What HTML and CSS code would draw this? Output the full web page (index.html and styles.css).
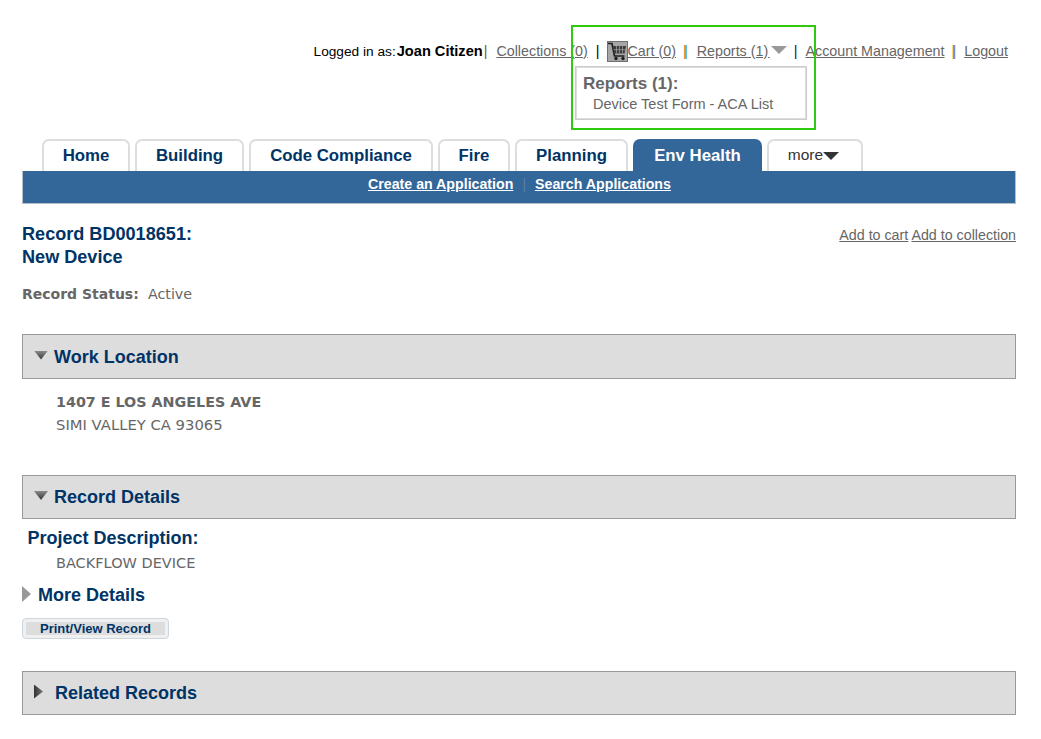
FILE: index.html
```html
<!DOCTYPE html>
<html lang="en">
<head>
<meta charset="utf-8">
<title>Record BD0018651</title>
<link rel="stylesheet" href="styles.css">
</head>
<body>
<div class="page">
  <header class="topbar">
    <span class="login">Logged in as:<b>Joan Citizen</b></span>
    <span class="sep sep-tan">|</span>
    <a class="toplink" href="#">Collections (0)</a>
    <span class="sep sep-black">|</span>
    <svg class="cart" viewBox="0 0 21 21" width="21" height="21" aria-hidden="true">
      <rect x="0.5" y="0.5" width="20" height="20" fill="#a6a6a6" stroke="#6f6f6f"/>
      <path d="M1 2.5h4l2.5 12.5h10" fill="none" stroke="#1f1f1f" stroke-width="1.7"/>
      <path d="M6 5h13l-1.5 7.5H7.4z" fill="#3d3d3d"/>
      <path d="M9.5 5v7.5M12.5 5v7.5M15.5 5v7.5M6.6 8.7h11.8" stroke="#a6a6a6" stroke-width=".7"/>
      <circle cx="9" cy="17.5" r="1.7" fill="#1f1f1f"/>
      <circle cx="16" cy="17.5" r="1.7" fill="#1f1f1f"/>
    </svg>
    <a class="toplink" href="#">Cart (0)</a>
    <span class="sep sep-fringe sep-wide">|</span>
    <a class="toplink" href="#">Reports (1)<span class="nbsp">&nbsp;</span></a>
    <span class="report-arrow"></span>
    <span class="sep sep-purple">|</span>
    <a class="toplink" href="#">Account Management</a>
    <span class="sep sep-fringe">|</span>
    <a class="toplink" href="#">Logout</a>
  </header>

  <div class="dropdown">
    <div class="dropdown-title">Reports (1):</div>
    <div class="dropdown-item">Device Test Form - ACA List</div>
  </div>
  <div class="highlight"></div>

  <nav class="tabs">
    <a class="tab tab-home" href="#">Home</a>
    <a class="tab tab-building" href="#">Building</a>
    <a class="tab tab-code" href="#">Code Compliance</a>
    <a class="tab tab-fire" href="#">Fire</a>
    <a class="tab tab-planning" href="#">Planning</a>
    <a class="tab tab-env active" href="#">Env Health</a>
    <a class="tab tab-more" href="#">more<span class="more-arrow"></span></a>
  </nav>
  <div class="subnav">
    <a href="#">Create an Application</a>
    <span class="subsep">|</span>
    <a href="#">Search Applications</a>
  </div>

  <div class="record-head">
    <h1>Record BD0018651:<br>New Device</h1>
    <div class="record-actions"><a href="#">Add to cart</a> <a href="#">Add to collection</a></div>
  </div>
  <p class="status"><b>Record Status:</b>&nbsp; Active</p>

  <section class="bar bar-work">
    <span class="tri-down"></span><h2>Work Location</h2>
  </section>
  <div class="address">
    <div class="addr-1">1407 E LOS ANGELES AVE</div>
    <div class="addr-2">SIMI VALLEY CA 93065</div>
  </div>

  <section class="bar bar-details">
    <span class="tri-down"></span><h2>Record Details</h2>
  </section>
  <h3 class="project-title">Project Description:</h3>
  <div class="project-text">BACKFLOW DEVICE</div>
  <div class="more-details">
    <span class="tri-right-grey"></span><h3>More Details</h3>
  </div>
  <a class="print-btn" href="#"><span>Print/View Record</span></a>

  <section class="bar bar-related">
    <span class="tri-right"></span><h2>Related Records</h2>
  </section>
</div>
</body>
</html>
```
FILE: styles.css
```css
* { box-sizing: border-box; }
html, body { margin: 0; padding: 0; background: #fff; }
body { font-family: "Liberation Sans", Arial, sans-serif; color: #666; overflow: hidden; }
.page { position: relative; width: 1041px; height: 739px; padding: 40px 25px 0 22px; }
a { color: inherit; }

.topbar { display: flex; align-items: center; justify-content: flex-end; height: 21px; padding-right: 8px; font-size: 14.3px; white-space: nowrap; }
.login { color: #000; font-size: 13.7px; }
.login b { font-weight: bold; font-size: 14.6px; margin-left: 1px; }
.toplink { color: #666; }
.nbsp { font-size: 5.5px; }
.sep { margin: 0 9px; color: #000; }
.sep-tan { margin: 0 9px 0 1px; color: #6b5a3a; }
.sep-black { margin: 0 7px 0 8px; color: #000; }
.sep-fringe { margin: 0 9px 0 7px; color: #c07a20; text-shadow: 1px 0 0 #2a80c8; }
.sep-wide { margin-right: 10px; }
.sep-purple { margin: 0 8px 0 7px; color: #1c0a5a; }
.cart { flex: none; margin-top: 2px; }
.report-arrow { width: 0; height: 0; margin: -2px 0 0 1px; border-left: 8px solid transparent; border-right: 8px solid transparent; border-top: 8px solid #999; }

.dropdown { position: absolute; left: 575px; top: 66px; width: 232px; height: 54px; border: 1px solid #ccc; box-shadow: inset 0 0 0 1px #ddd; padding: 7px 0 0 7px; }
.dropdown-title { font-size: 17px; font-weight: bold; color: #666; line-height: 19px; }
.dropdown-item { font-size: 14.5px; color: #666; line-height: 17px; margin: 3px 0 0 10px; }
.highlight { position: absolute; left: 571px; top: 25px; width: 245px; height: 105px; border: 2px solid #2fc90f; pointer-events: none; }

.tabs { display: flex; gap: 5px; margin-top: 78px; padding-left: 20px; height: 32px; }
.tab { display: flex; justify-content: center; padding-top: 5px; height: 32px; background: #fff; border: 2px solid #ddd; border-bottom: 0; border-radius: 7px 7px 0 0; font-size: 16.8px; line-height: 20px; font-weight: bold; color: #003366; text-decoration: none; }
.tab-home { width: 88px; }
.tab-building { width: 109px; }
.tab-code { width: 184px; }
.tab-fire { width: 72px; }
.tab-planning { width: 113px; }
.tab-env { width: 129px; }
.tab-more { width: 96px; padding-right: 3px; font-size: 15.5px; line-height: 18px; font-weight: normal; color: #333; align-items: flex-start; }
.tab.active { background: #336699; border-color: #336699; color: #fff; }
.more-arrow { width: 0; height: 0; margin-top: 6px; border-left: 8px solid transparent; border-right: 8px solid transparent; border-top: 8px solid #333; }

.subnav { display: flex; justify-content: center; align-items: center; gap: 9px; height: 33px; padding: 0 0 7px 1px; background: #336699; border: 1px solid #b5bfc9; border-top: 0; font-size: 14.2px; font-weight: bold; color: #fff; }
.subsep { color: #5a7fa5; font-weight: normal; }

.record-head { display: flex; justify-content: space-between; align-items: flex-start; margin-top: 19px; }
h1 { margin: 0; font-size: 18.1px; line-height: 23px; font-weight: bold; color: #003366; }
.record-actions { margin-top: 4px; font-size: 14.25px; color: #666; }

.status { margin: 16px 0 0; font-family: "DejaVu Sans", Verdana, sans-serif; font-size: 14.3px; line-height: 18px; color: #666; }
.status b { font-size: 14px; }

.bar { display: flex; align-items: center; height: 45px; background: #ddd; border: 1px solid #999; }
.bar h2 { margin: 0; font-size: 18px; font-weight: bold; color: #003366; line-height: 22px; }
.bar-work { margin-top: 31px; }
.bar-details { margin-top: 0; height: 44px; }
.bar-related { margin-top: 32px; height: 44px; }
.tri-down { width: 14px; height: 9px; margin: -3px 6px 0 11px; background: linear-gradient(#8a8a8a, #333); clip-path: polygon(0 0, 100% 0, 50% 100%); }
.tri-right { width: 9px; height: 14px; margin: -3px 12px 0 11px; background: linear-gradient(90deg, #333, #777); clip-path: polygon(0 0, 100% 50%, 0 100%); }

.address { height: 96px; padding: 12px 0 0 34px; font-family: "DejaVu Sans", Verdana, sans-serif; font-size: 14.8px; line-height: 22px; color: #666; }
.addr-1 { font-weight: bold; font-size: 14.3px; line-height: 23px; }

.project-title { margin: 8px 0 0 5.5px; font-size: 18px; line-height: 22px; font-weight: bold; color: #003366; }
.project-text { margin: 5px 0 0 34px; font-family: "DejaVu Sans", Verdana, sans-serif; font-size: 14.5px; line-height: 18px; color: #666; }
.more-details { display: flex; align-items: center; gap: 7px; margin-top: 12px; height: 22px; }
.more-details h3 { margin: 0; font-size: 18px; line-height: 22px; font-weight: bold; color: #003366; }
.tri-right-grey { width: 0; height: 0; margin-top: -2px; border-top: 8px solid transparent; border-bottom: 8px solid transparent; border-left: 9px solid #999; }
.print-btn { display: block; width: 147px; height: 21px; margin-top: 12px; padding: 3px; background: #f0f0f0; border: 1px solid #cdd6dc; border-radius: 4px; font-size: 13px; font-weight: bold; color: #003366; text-decoration: none; text-align: center; }
.print-btn span { display: block; height: 13px; line-height: 13px; background: #ddd; }
```
